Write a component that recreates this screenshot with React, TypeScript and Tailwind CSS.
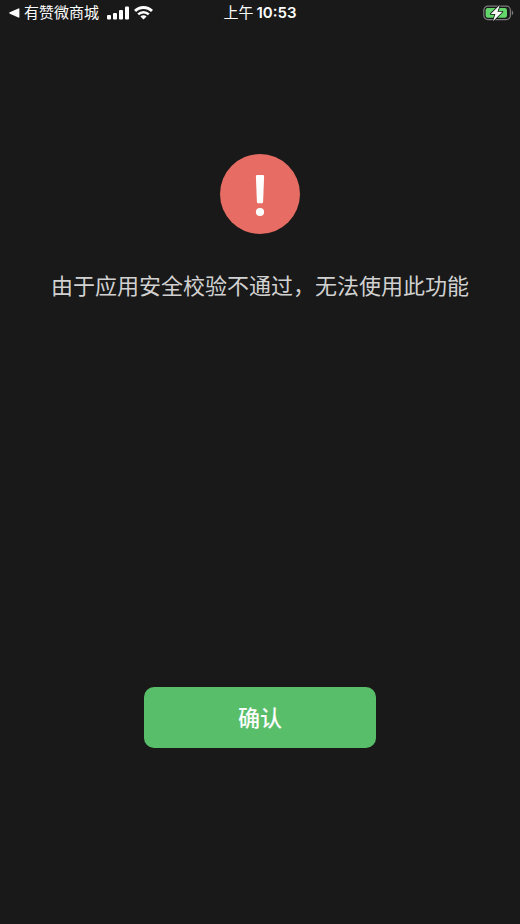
function SignalIcon() {
    return (
        <svg width="22" height="14" viewBox="0 0 22 14" fill="currentColor" aria-hidden="true">
            <rect x="0" y="9" width="4" height="4.5" rx="1" />
            <rect x="6" y="7" width="4" height="6.5" rx="1" />
            <rect x="12" y="4" width="4" height="9.5" rx="1" />
            <rect x="18" y="0.5" width="4" height="13" rx="1" />
        </svg>
    )
}

function WifiIcon() {
    return (
        <svg width="19" height="14" viewBox="0 0 19 14" fill="none" aria-hidden="true">
            <path d="M1 5a12 12 0 0 1 17 0" stroke="currentColor" strokeWidth="2.9" />
            <path d="M4.2 8.4a7.5 7.5 0 0 1 10.6 0" stroke="currentColor" strokeWidth="2.6" />
            <path d="M9.5 13.6 6.4 10.6a4.4 4.4 0 0 1 6.2 0z" fill="currentColor" />
        </svg>
    )
}

function BatteryIcon() {
    return (
        <svg width="31" height="18" viewBox="0 0 31 18" aria-hidden="true">
            <rect x="0.8" y="2.2" width="26.6" height="13.4" rx="4" fill="none" stroke="#7b7b7b" strokeWidth="1.2" />
            <path d="M28.8 6.6c1.9.7 1.9 4 0 4.7z" fill="#7b7b7b" />
            <rect x="2.6" y="4" width="21.4" height="9.8" rx="2.2" fill="#62d66b" />
            <path
                d="M16.8 1 7.8 9.9h4.6L10 17.2l9.4-9.4h-4.9z"
                fill="#fff"
                stroke="#191919"
                strokeWidth="1.6"
                strokeLinejoin="round"
                paintOrder="stroke"
            />
        </svg>
    )
}

function StatusBar() {
    return (
        <header className="grid h-[26px] grid-cols-[1fr_auto_1fr] items-center text-[15px] leading-5 text-white">
            <div className="flex items-center gap-2 pl-[9px]">
                <a href="#" className="flex items-center gap-1">
                    <svg width="11" height="10" viewBox="0 0 11 10" fill="currentColor" aria-hidden="true">
                        <path d="M0.8 4.3 9.4 0.4q1-.4 1 .6v8q0 1-1 .6L.8 5.7q-1.2-.7 0-1.4z" />
                    </svg>
                    <span>有赞微商城</span>
                </a>
                <div className="flex items-center gap-[5px]">
                    <SignalIcon />
                    <WifiIcon />
                </div>
            </div>
            <div className="flex items-center gap-[3px]">
                <span>上午</span>
                <time className="font-semibold">10:53</time>
            </div>
            <div className="flex justify-end pr-[6px]">
                <BatteryIcon />
            </div>
        </header>
    )
}

export default function App() {
    return (
        <div className="flex min-h-screen flex-col bg-[#191919] font-[Inter,'Noto_Sans_CJK_SC',sans-serif]">
            <StatusBar />
            <main className="flex flex-1 flex-col items-center pt-32 pb-44">
                <svg className="size-20" viewBox="0 0 80 80" aria-hidden="true">
                    <circle cx="40" cy="40" r="40" fill="#e66c64" />
                    <path
                        d="M37.2 21h5.6q1.4 0 1.3 1.4l-1 25.6q-.1 1.3-1.3 1.3h-3.6q-1.2 0-1.3-1.3l-1-25.6q-.1-1.4 1.3-1.4z"
                        fill="#fff"
                    />
                    <circle cx="40" cy="58" r="4.1" fill="#fff" />
                </svg>
                <p className="mt-9 text-center text-[22px] leading-8 text-[#d1d1d1]">
                    由于应用安全校验不通过，无法使用此功能
                </p>
                <button
                    type="button"
                    className="mt-auto h-[61px] w-[232px] rounded-[10px] bg-[#58be6a] text-[22px] leading-8 font-medium text-white"
                >
                    确认
                </button>
            </main>
        </div>
    )
}
